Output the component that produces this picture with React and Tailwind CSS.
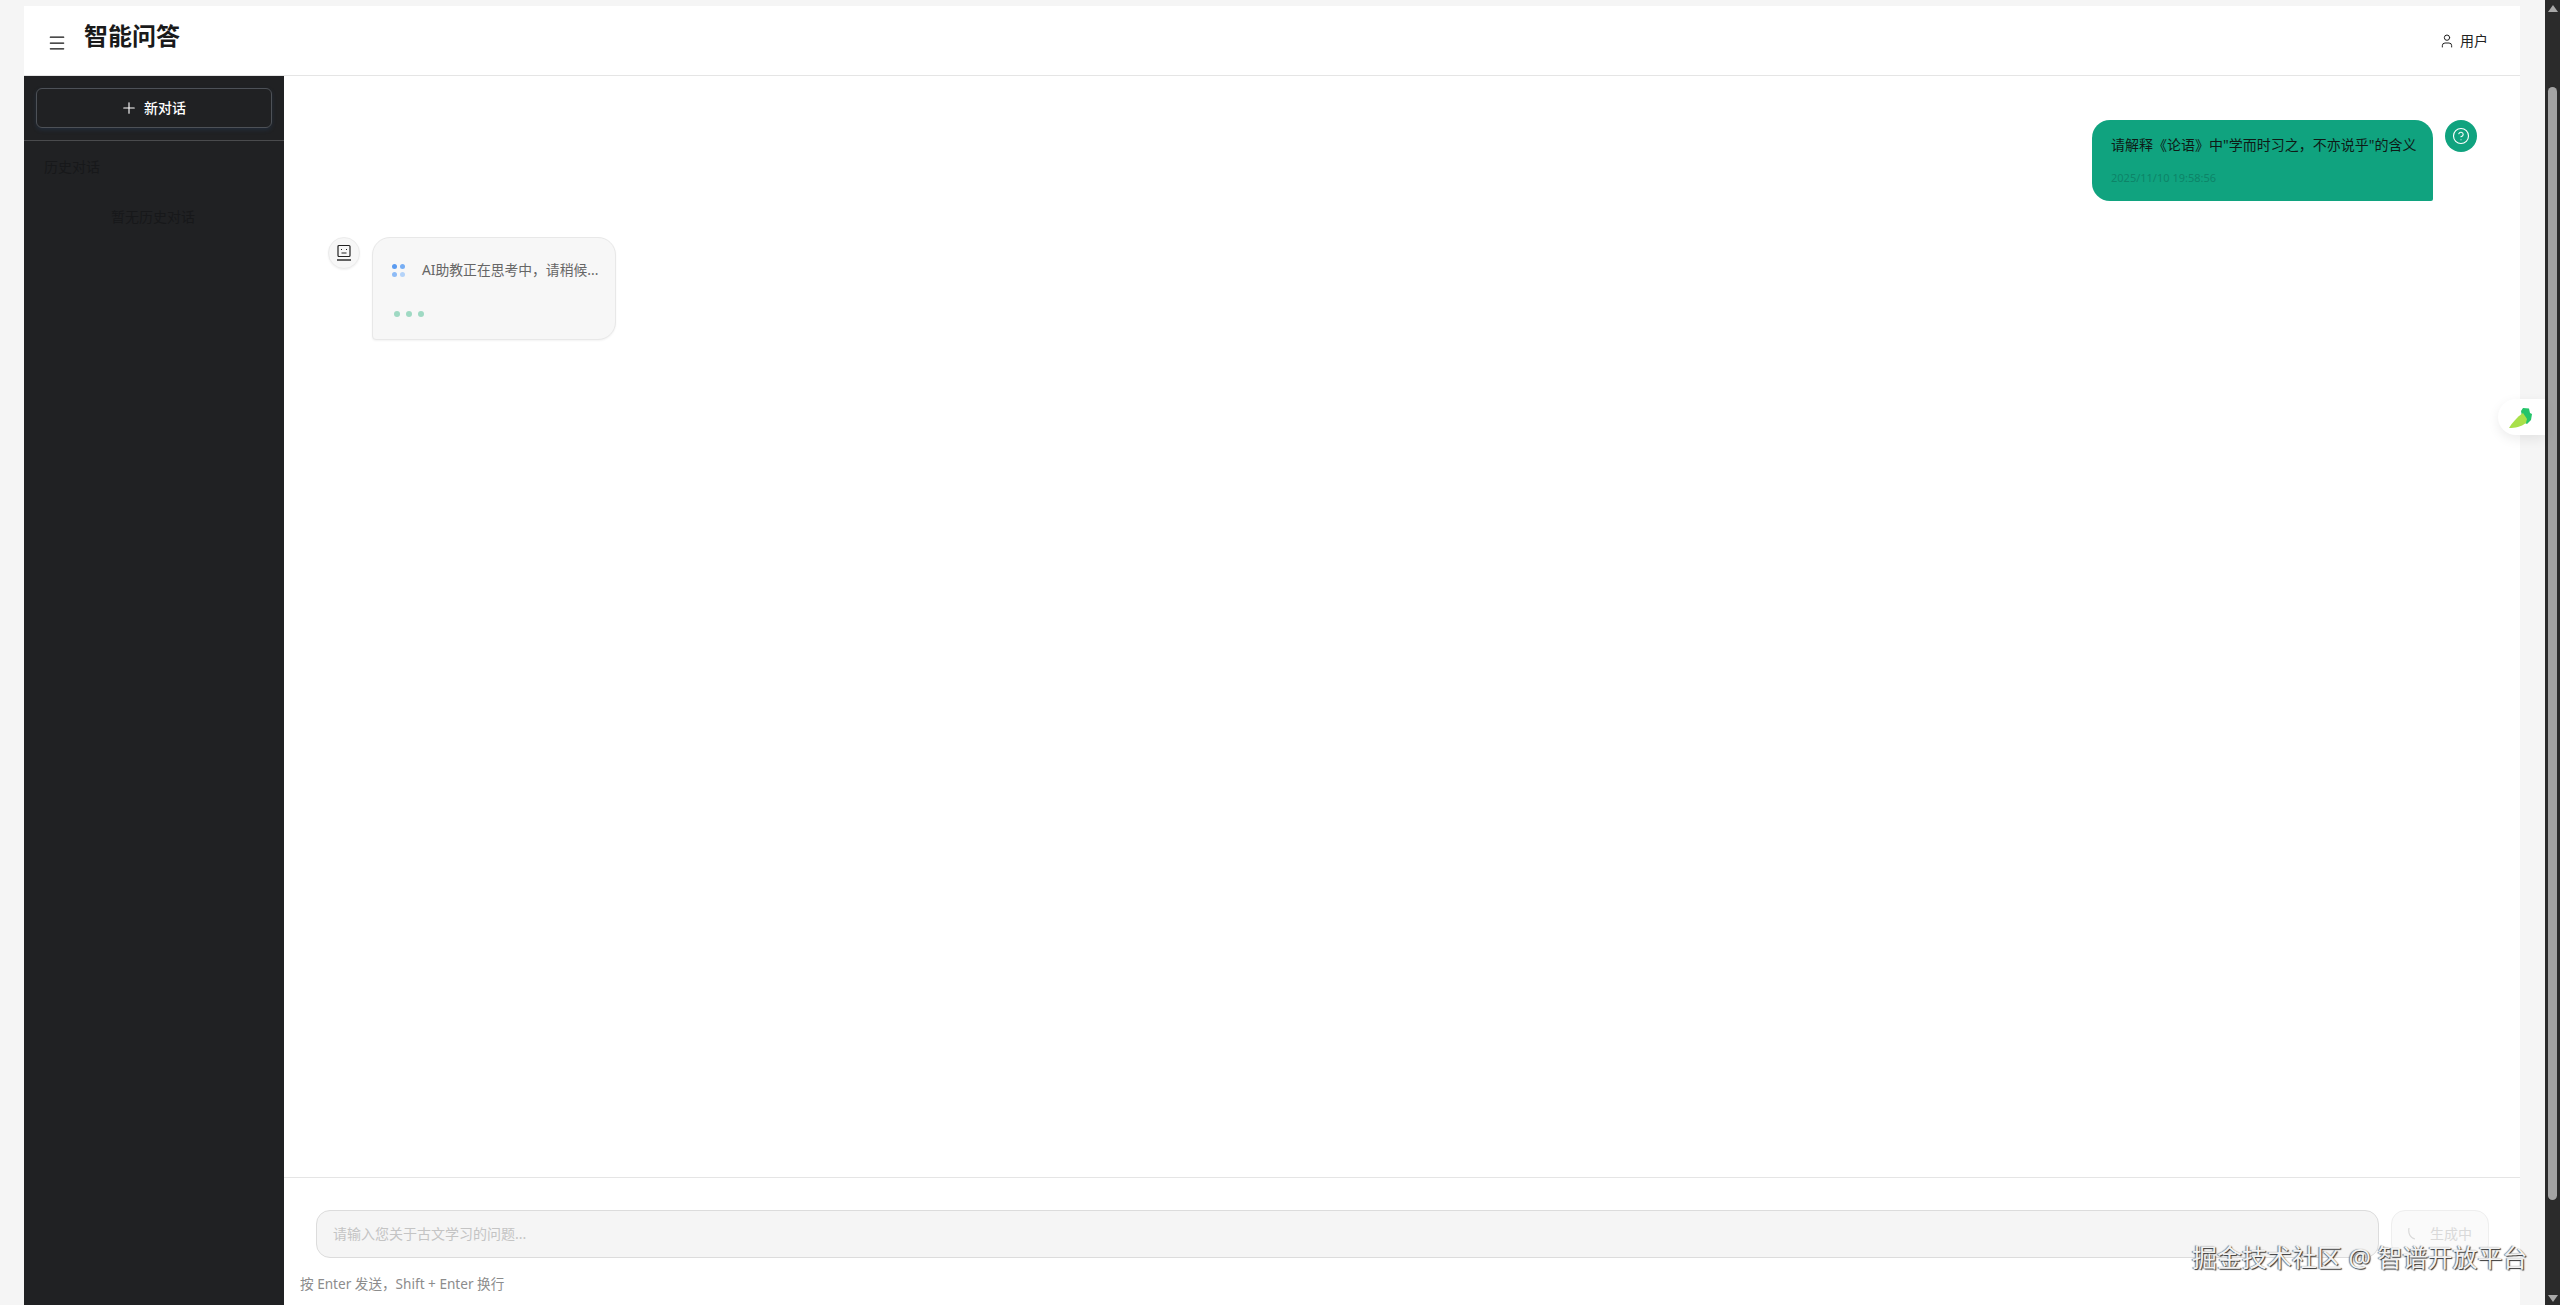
import React from "react";
import { Menu, Plus, User, CircleHelp } from "lucide-react";

const font = "font-['Noto_Sans','Noto_Sans_CJK_SC',sans-serif]";

function Scrollbar() {
  return (
    <div className="w-[15px] h-full bg-[#2b2b2b] flex flex-col items-center justify-between pt-[5px] pb-[3px] shrink-0">
      <div className="flex flex-col items-center w-full">
        <div className="w-0 h-0 border-x-[5px] border-x-transparent border-b-[7px] border-b-[#a8a8a8]" />
        <div className="w-[9px] h-[1113px] mt-[75px] rounded-full bg-[#a3a3a3]" />
      </div>
      <div className="w-0 h-0 border-x-[5px] border-x-transparent border-t-[7px] border-t-[#a8a8a8]" />
    </div>
  );
}

function BotIcon() {
  return (
    <svg width="16" height="18" viewBox="0 0 16 18" fill="none" stroke="#222" strokeWidth="1.2">
      <rect x="2" y="1.5" width="12" height="11" rx="1" />
      <path d="M5 5.5h1M10 5.5h1M5.5 9h5" />
      <path d="M1 16h14" strokeWidth="1.4" />
    </svg>
  );
}

function Sidebar() {
  return (
    <aside className="w-[260px] shrink-0 bg-[#202123] flex flex-col">
      <div className="px-3 pt-3 pb-[12px] border-b border-[#4a4b4d]">
        <button className={`w-full h-10 rounded-md border border-[#4d5157] shadow-[0_2px_4px_rgba(40,70,110,0.3)] flex items-center justify-center gap-[6px] pr-[2px] text-white text-sm ${font}`}>
          <Plus size={18} strokeWidth={1.5} />
          <span className="font-medium">新对话</span>
        </button>
      </div>
      <div className="px-5 pt-[15px] text-[#17181a] text-sm leading-[22px]">历史对话</div>
      <div className="pt-[28px] pr-[2px] text-center text-[#17181a] text-sm leading-[22px]">暂无历史对话</div>
    </aside>
  );
}

function UserMessage() {
  return (
    <div className="flex justify-end items-start gap-3 pr-[43px]">
      <div className="w-[341px] h-[81px] bg-[#10a37f] rounded-[18px] rounded-br-[2px] px-[19px] pt-[14px]">
        <p className="text-sm leading-[22px] text-[#0e1a16] whitespace-nowrap">
          请解释《论语》中"学而时习之，不亦说乎"的含义
        </p>
        <p className="mt-[14px] text-[11px] leading-4 text-[#0d8468]">2025/11/10 19:58:56</p>
      </div>
      <div className="w-8 h-8 rounded-full bg-[#10a37f] flex items-center justify-center text-white">
        <CircleHelp size={18} strokeWidth={1.5} />
      </div>
    </div>
  );
}

function BotMessage() {
  return (
    <div className="flex items-start gap-3 pl-[44px] mt-[36px]">
      <div className="w-8 h-8 rounded-full bg-[#f7f7f7] border border-[#ececec] shadow-[0_1px_2px_rgba(0,0,0,0.06)] flex items-center justify-center">
        <BotIcon />
      </div>
      <div className="w-[244px] h-[103px] bg-[#f7f7f7] border border-[#e8e8e8] rounded-[18px] rounded-bl-[4px] shadow-[0_1px_2px_rgba(0,0,0,0.05)] pl-[19px] pt-[22px]">
        <div className="flex items-center gap-[17px]">
          <div className="grid grid-cols-2 gap-x-[3px] gap-y-[3px] w-[13px]">
            <span className="w-[5px] h-[5px] rounded-full bg-[#5b9bf0]" />
            <span className="w-[5px] h-[5px] rounded-full bg-[#77aef4]" />
            <span className="w-[5px] h-[5px] rounded-full bg-[#8dbbf6]" />
            <span className="w-[5px] h-[5px] rounded-full bg-[#b4d3f9]" />
          </div>
          <span className="text-[13.8px] leading-5 text-[#666] whitespace-nowrap">AI助教正在思考中，请稍候...</span>
        </div>
        <div className="flex gap-[6px] mt-[31px] ml-[2px]">
          <span className="w-[6px] h-[6px] rounded-full bg-[#9fd9c3]" />
          <span className="w-[6px] h-[6px] rounded-full bg-[#9fd9c3]" />
          <span className="w-[6px] h-[6px] rounded-full bg-[#9fd9c3]" />
        </div>
      </div>
    </div>
  );
}

function Composer() {
  return (
    <div className="h-[128px] border-t border-[#e5e5e5] px-4 pt-8 shrink-0">
      <div className="flex gap-3 pl-4 pr-[15px]">
        <div className="flex-1 h-12 rounded-[14px] border border-[#dcdcdc] bg-[#f5f5f5] px-[16px] flex items-center text-sm text-[#c4c4c4]">
          请输入您关于古文学习的问题...
        </div>
        <div className="w-[98px] h-12 rounded-[14px] border border-[#eeeeee] bg-[#fafafa] flex items-center pl-[16px] gap-[14px] text-sm text-[#d9d9d9]">
          <svg width="8" height="14" viewBox="0 0 8 14" fill="none" stroke="#d9d9d9" strokeWidth="1.2">
            <path d="M1 1 C0 6 2 11 7 12" />
          </svg>
          <span>生成中</span>
        </div>
      </div>
      <p className="mt-[16px] text-[13.6px] leading-5 text-[#8c8c8c]">按 Enter 发送，Shift + Enter 换行</p>
    </div>
  );
}

export default function App() {
  return (
    <div className={`w-[2560px] h-[1305px] overflow-hidden relative bg-[#f5f5f5] flex ${font}`}>
      <div className="w-[2496px] ml-6 mr-[25px] pt-[6px] flex flex-col">
        <header className="h-[70px] bg-white border-b border-[#e5e5e5] flex items-center justify-between pl-[23px] pr-[32px] shrink-0">
          <div className="flex items-center gap-[17px]">
            <Menu size={20} className="text-[#111] mt-[4px]" strokeWidth={1.5} />
            <h1 className="text-2xl font-bold text-[#1a1a1a] -mt-[10px]">智能问答</h1>
          </div>
          <div className="flex items-center gap-[5px] text-sm text-[#222]">
            <User size={16} strokeWidth={1.5} />
            <span>用户</span>
          </div>
        </header>
        <div className="flex flex-1 min-h-0">
          <Sidebar />
          <main className="flex-1 bg-white flex flex-col">
            <div className="flex-1 pt-[44px]">
              <UserMessage />
              <BotMessage />
            </div>
            <Composer />
          </main>
        </div>
      </div>
      <Scrollbar />

      {/* floating tab */}
      <div className="absolute left-[2498px] top-[399px] w-[47px] h-[36px] bg-white rounded-l-full shadow-[0_4px_12px_rgba(0,0,0,0.08)] flex items-center pl-[10px]">
        <svg width="26" height="24" viewBox="0 0 26 24">
          <path d="M13 6 L15 3 L21 3.5 L22 8 L24 9 L23 15 L19 19 L15 17 Z" fill="#25c46a" />
          <path d="M1 23 C4 18 9 12 15 8 L19 14 L18 18 C13 22 7 23 1 23 Z" fill="#a8e04a" />
        </svg>
      </div>

      {/* watermark */}
      <div className="absolute left-[2192px] top-[1241px] text-[25px] leading-[32px] text-[#f2f2f2] whitespace-nowrap [text-shadow:1px_1px_1px_#333,-1px_0_1px_#777]">
        掘金技术社区 @ 智谱开放平台
      </div>
    </div>
  );
}
